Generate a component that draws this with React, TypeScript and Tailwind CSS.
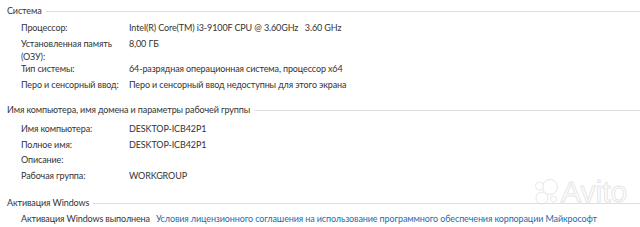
const fontCls = "font-['Lato','Noto_Sans',sans-serif]";

function Header({ title, className = "" }: { title: string; className?: string }) {
  return (
    <div className={`flex items-center pl-[7px] h-[14px] ${className}`}>
      <span className="text-[#333] whitespace-nowrap">{title}</span>
      <div className="flex-1 h-px bg-[#dedede] ml-[4px] mt-[2px]" />
    </div>
  );
}

function Row({ label, value, className = "" }: { label: React.ReactNode; value?: string; className?: string }) {
  return (
    <div className={`flex pl-[21px] ${className}`}>
      <div className="w-[108px] shrink-0 text-[#333] whitespace-nowrap">{label}</div>
      <div className="text-[#333] whitespace-pre">{value}</div>
    </div>
  );
}

export default function App() {
  return (
    <div className={`relative w-[640px] h-[227px] bg-white overflow-hidden text-[9px] tracking-[-0.12px] leading-[13px] ${fontCls}`}>
      <Header title="Система" className="mt-[3px]" />
      <Row className="mt-[4px]" label="Процессор:" value="Intel(R) Core(TM) i3-9100F CPU @ 3.60GHz   3.60 GHz" />
      <Row
        className="mt-[3px]"
        label={<>Установленная память<br />(ОЗУ):</>}
        value="8,00 ГБ"
      />
      <Row className="-mt-[1.5px]" label="Тип системы:" value="64-разрядная операционная система, процессор x64" />
      <Row className="mt-[3px]" label="Перо и сенсорный ввод:" value="Перо и сенсорный ввод недоступны для этого экрана" />

      <Header title="Имя компьютера, имя домена и параметры рабочей группы" className="mt-[11.5px]" />
      <Row className="mt-[6px]" label="Имя компьютера:" value="DESKTOP-ICB42P1" />
      <Row className="mt-[2.5px]" label="Полное имя:" value="DESKTOP-ICB42P1" />
      <Row className="mt-[2.5px]" label="Описание:" />
      <Row className="mt-[3px]" label="Рабочая группа:" value="WORKGROUP" />

      <Header title="Активация Windows" className="mt-[13px]" />
      <div className="flex pl-[21px] mt-[3px] whitespace-nowrap">
        <span className="text-[#333]">Активация Windows выполнена</span>
        <span className="ml-[6px] text-[#2a6aa8]">
          Условия лицензионного соглашения на использование программного обеспечения корпорации Майкрософт
        </span>
      </div>

      {/* avito watermark */}
      <div className="absolute left-[534px] top-[177px] flex items-center gap-[1px] pointer-events-none opacity-60">
        <svg width="26" height="28" viewBox="0 0 26 28">
          <circle cx="16" cy="9" r="7.5" fill="white" stroke="#d8d8d8" strokeWidth="1" />
          <circle cx="5.5" cy="8" r="4" fill="white" stroke="#d8d8d8" strokeWidth="1" />
          <circle cx="8" cy="20" r="6" fill="white" stroke="#d8d8d8" strokeWidth="1" />
          <circle cx="19.5" cy="21" r="3" fill="white" stroke="#d8d8d8" strokeWidth="1" />
        </svg>
        <span className="text-[30px] leading-[30px] tracking-normal font-['Liberation_Sans',sans-serif] text-white [-webkit-text-stroke:1px_#d6d6d6]">
          Avito
        </span>
      </div>
    </div>
  );
}
